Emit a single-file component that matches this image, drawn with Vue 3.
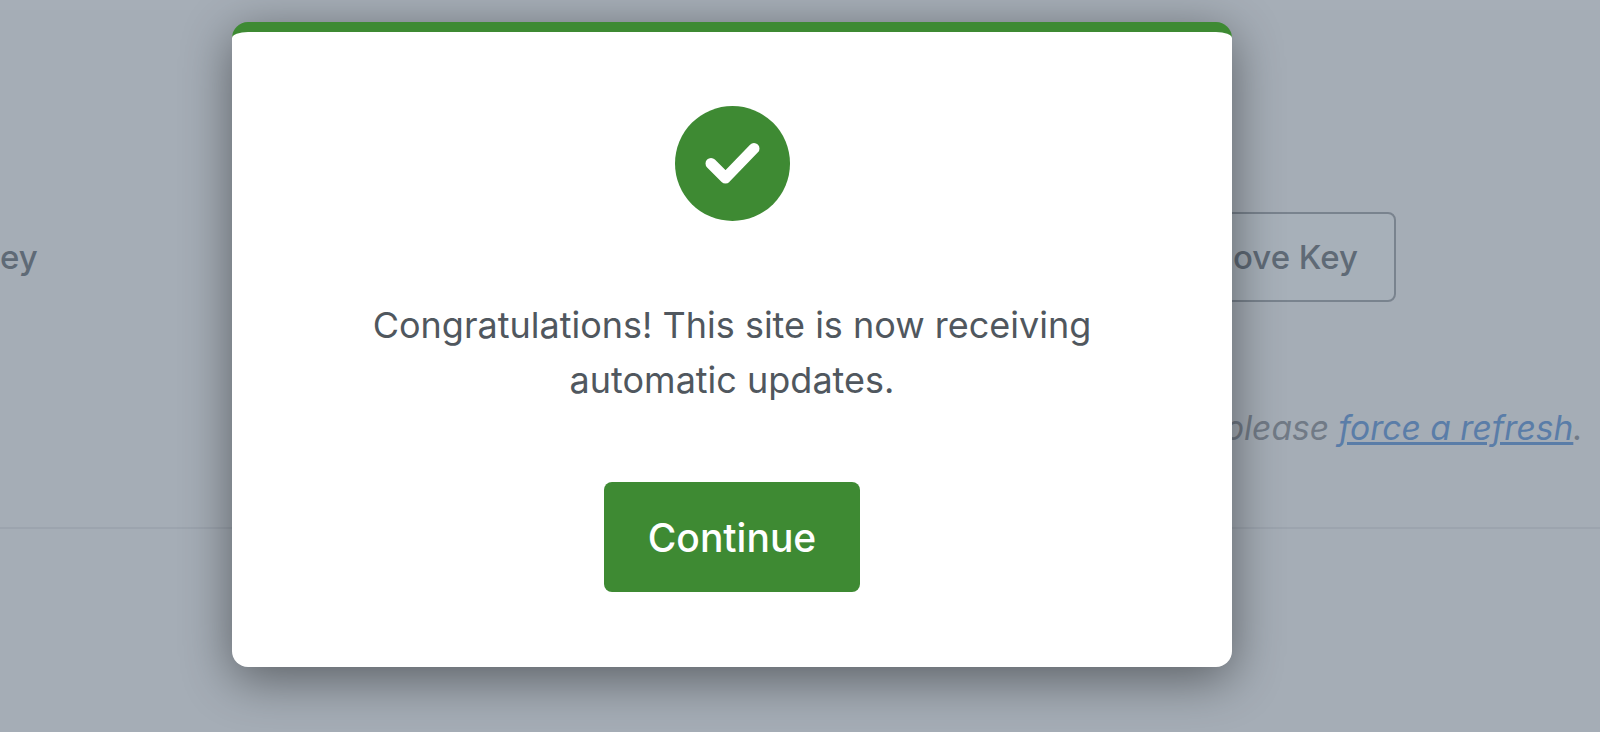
<script setup>
const title = 'Congratulations! This site is now receiving automatic updates.'
</script>

<template>
  <div class="page">
    <div class="content">
      <div class="top-strip"></div>
      <div class="key-row">
        <span class="verify">ey</span>
        <button class="remove">Remove Key</button>
      </div>
      <p class="note">please <a href="#" @click.prevent>force a refresh</a>.</p>
      <div class="divider"></div>
    </div>
    <div class="overlay"></div>
    <div class="modal">
      <svg class="check" viewBox="0 0 115 115" aria-hidden="true">
        <circle cx="57.5" cy="57.5" r="57.5" fill="#3e8a33" />
        <path d="M36 57.5 L50.5 72 L79 42.5" fill="none" stroke="#fff" stroke-width="11" stroke-linecap="round" stroke-linejoin="round" />
      </svg>
      <p class="message">{{ title }}</p>
      <button class="continue">Continue</button>
    </div>
  </div>
</template>

<style>
html, body { margin: 0; background: #f0f0f1; }
</style>

<style scoped>
.page {
  position: relative;
  width: 1600px;
  height: 732px;
  overflow: hidden;
  background: #f0f0f1;
  font-family: Inter, "Liberation Sans", sans-serif;
}
.content {
  display: flex;
  flex-direction: column;
  height: 100%;
}
.top-strip {
  height: 10px;
  background: #f3f3f4;
}
.key-row {
  display: flex;
  justify-content: space-between;
  align-items: center;
  margin-top: 202px;
  padding-right: 204px;
  height: 90px;
}
.verify {
  font-size: 33px;
  font-weight: 500;
  color: #50575e;
}
.remove {
  width: 300px;
  height: 90px;
  padding: 0 36px 0 0;
  text-align: right;
  border: 2px solid #8c8f94;
  border-radius: 8px;
  background: #f6f7f7;
  color: #50575e;
  font: 500 33px Inter, "Liberation Sans", sans-serif;
}
.note {
  margin: 106px 17px 0 0;
  text-align: right;
  font-size: 33.6px;
  font-style: italic;
  line-height: 40px;
  color: #787c82;
}
.note a {
  color: #4482d0;
  text-decoration: underline;
  text-decoration-thickness: 2.5px;
}
.divider {
  margin-top: 79px;
  height: 2px;
  background: #dcdcde;
}
.overlay {
  position: absolute;
  inset: 0;
  background: rgba(108, 121, 138, 0.57);
}
.modal {
  position: absolute;
  left: 232px;
  top: 22px;
  box-sizing: border-box;
  width: 1000px;
  height: 645px;
  padding: 74px 60px 0;
  display: flex;
  flex-direction: column;
  align-items: center;
  background: #fff;
  border-top: 10px solid #3e8a33;
  border-radius: 16px;
  box-shadow: 0 12px 50px rgba(0, 0, 0, 0.45);
}
.check {
  width: 115px;
  height: 115px;
  flex: none;
}
.message {
  margin: 77px 0 0;
  max-width: 780px;
  text-align: center;
  font-size: 36px;
  line-height: 55px;
  color: #50575e;
}
.continue {
  margin-top: 74px;
  width: 256px;
  height: 110px;
  border: 0;
  border-radius: 8px;
  background: #3e8a33;
  color: #fff;
  font: 500 39px Inter, "Liberation Sans", sans-serif;
}
</style>
